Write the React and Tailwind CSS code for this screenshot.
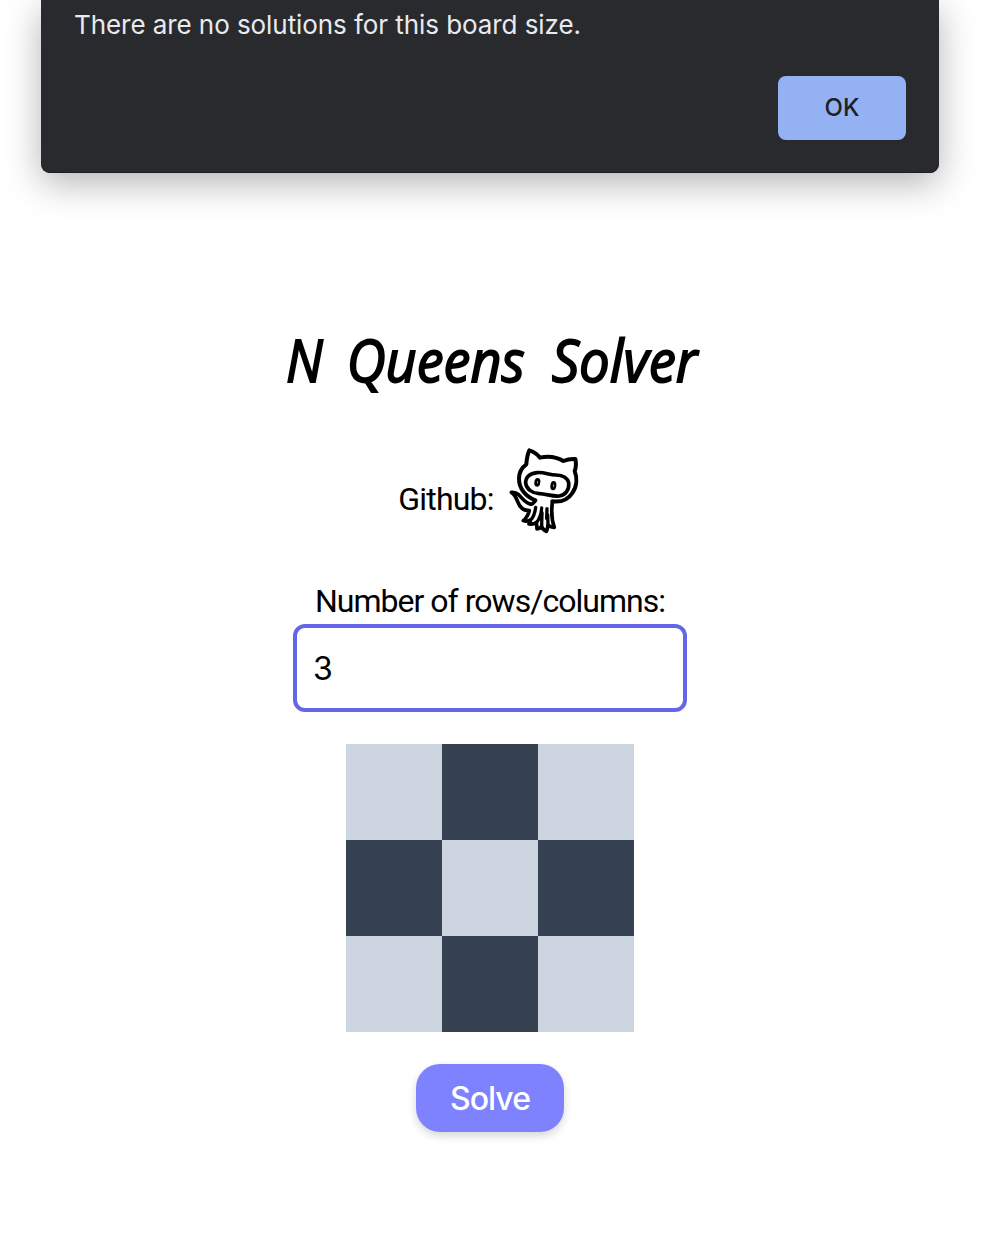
import React from "react";

function Octocat() {
  return (
    <svg
      className="h-[100px] w-[90px]"
      viewBox="0 0 270 300"
      fill="none"
      stroke="#000"
      strokeWidth="12"
      strokeLinecap="round"
      strokeLinejoin="round"
      role="img"
      aria-label="Github"
    >
      <path d="M106 181 C78 170 57 147 57 116 C57 97 65 83 79 73 C80 57 83 42 88 31 C102 35 112 43 120 53 C145 47 172 52 190 63 C202 58 214 56 226 57 C229 70 228 83 224 93 C232 113 231 139 217 159 C203 181 182 187 157 184" />
      <path d="M111 98 C130 95 148 105 168 105 C188 106 202 112 206 128 C209 149 196 165 178 168 C156 170 140 162 118 161 C97 160 80 148 77 130 C76 111 90 100 111 98 Z" strokeWidth="11" />
      <ellipse cx="112" cy="127" rx="5" ry="9" strokeWidth="8" transform="rotate(8 112 127)" />
      <ellipse cx="160" cy="137" rx="5" ry="10" strokeWidth="8" transform="rotate(8 160 137)" />
      <path d="M106 181 C102 188 98 195 90 192 C73 187 64 171 55 163 C49 158 42 156 34 157 C44 163 49 174 53 185 C59 202 72 212 88 212 C85 224 80 234 70 242 C77 245 84 244 91 240 C91 245 90 249 87 252 C96 253 103 252 109 247 C110 256 111 262 111 267 C117 267 121 264 125 260 C128 267 133 271 139 274 C142 268 143 262 144 256 C150 260 156 263 163 262 C155 241 154 213 157 187" strokeWidth="11" />
      <path d="M107 202 C105 219 100 232 92 240 M125 204 C124 222 119 236 110 247 M141 206 L140 235 M126 218 L125 258 M143 224 L144 255" strokeWidth="10" />
    </svg>
  );
}

function AlertDialog() {
  return (
    <div
      role="alertdialog"
      className="ml-[41px] flex h-[173px] w-[898px] flex-col rounded-b-[9px] bg-[#292a2d] px-[33px] pb-[33px] font-['Inter',sans-serif] shadow-[0_10px_36px_rgba(0,0,0,0.3),inset_0_-1px_0_#1c1d20]"
    >
      <p className="mt-[5px] whitespace-nowrap text-[26px] leading-10 tracking-[-0.07px] text-[#e8eaed]">
        There are no solutions for this board size.
      </p>
      <button className="mt-auto h-16 w-32 self-end rounded-lg bg-[#94b2f3] text-2xl font-medium text-[#202124]">
        OK
      </button>
    </div>
  );
}

function Board({ size }) {
  return (
    <div className="mt-8 grid grid-cols-3">
      {Array.from({ length: size * size }, (_, i) => (
        <div key={i} className={i % 2 ? "size-24 bg-[#364152]" : "size-24 bg-[#cdd5e0]"} />
      ))}
    </div>
  );
}

export default function App() {
  return (
    <div className="h-[1242px] w-[1004px] overflow-hidden bg-white text-black">
      <AlertDialog />
      <main className="flex w-[980px] flex-col items-center font-['Roboto',sans-serif]">
        <h1 className="ml-1.5 mt-[147px] flex h-20 w-[414px] items-center justify-between font-['Open_Sans',sans-serif] text-[58px] font-medium italic leading-[80px] [-webkit-text-stroke:1.8px_#000]">
          <span className="flex w-9 justify-center"><span className="scale-x-90">N</span></span>
          <span className="flex w-[176px] justify-center"><span className="scale-x-93">Queens</span></span>
          <span className="flex w-[150px] justify-center"><span className="scale-x-94">Solver</span></span>
        </h1>
        <div className="mt-10 flex h-[100px] items-center gap-1.5 pl-2">
          <span className="mt-[18px] text-[32px] leading-10 tracking-[-0.8px]">Github:</span>
          <Octocat />
        </div>
        <label htmlFor="size" className="mt-[41px] whitespace-nowrap text-[32px] leading-10 tracking-[-0.97px]">
          Number of rows/columns:
        </label>
        <input
          id="size"
          defaultValue="3"
          className="mt-[3px] h-[88px] w-[394px] rounded-xl border-4 border-[#6366e8] px-4 font-['Inter',sans-serif] text-[32px] outline-none"
        />
        <Board size={3} />
        <button className="mt-8 h-[68px] w-[148px] rounded-3xl bg-[#7f82ff] pt-0.5 font-['Inter',sans-serif] text-[32px] font-medium tracking-[-1px] text-white shadow-[0_4px_8px_rgba(0,0,0,0.16)]">
          Solve
        </button>
      </main>
    </div>
  );
}
